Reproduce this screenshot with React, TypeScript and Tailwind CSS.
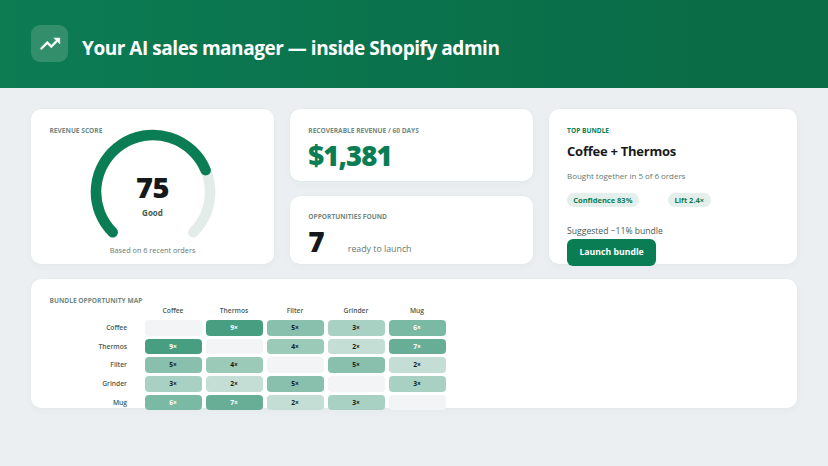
import type { ReactNode } from 'react';
import clsx from 'clsx';

const products = ['Coffee', 'Thermos', 'Filter', 'Grinder', 'Mug'];

const matrix = [
  [0, 9, 5, 3, 6],
  [9, 0, 4, 2, 7],
  [5, 4, 0, 5, 2],
  [3, 2, 5, 0, 3],
  [6, 7, 2, 3, 0],
];

const cellColors: Record<number, string> = {
  0: 'bg-[#f2f4f6]',
  2: 'bg-[#c4ddd5] text-[#16201c]',
  3: 'bg-[#a9d1c3] text-[#16201c]',
  4: 'bg-[#9bcab9] text-[#16201c]',
  5: 'bg-[#89c0ad] text-[#16201c]',
  6: 'bg-[#7ab9a3] text-white',
  7: 'bg-[#68ae96] text-white',
  9: 'bg-[#489e80] text-white',
};

const Card = ({ className, children }: { className?: string; children: ReactNode }) => (
  <div className={clsx('rounded-[10px] bg-white px-[18.5px] whitespace-nowrap shadow-[0_0_0_0.5px_#e0e9e6,0_3px_8px_rgba(20,60,45,0.03)]', className)}>
    {children}
  </div>
);

const Label = ({ className, children }: { className?: string; children: ReactNode }) => (
  <div className={clsx('text-[6.6px] leading-[10px] font-bold', className)}>{children}</div>
);

const Gauge = () => (
  <svg className="block" width="126" height="112" viewBox="0 0 126 112" fill="none" strokeWidth="10.5" strokeLinecap="round">
    <path d="M22.7 103.3A57 57 0 1 1 103.3 103.3" stroke="#e4ecea" />
    <path d="M22.7 103.3A57 57 0 1 1 115.66 41.19" stroke="#0b7d54" />
  </svg>
);

const App = () => {
  return (
    <div className="h-[466px] w-[828px] overflow-hidden bg-[#ebeff2] font-['Open_Sans','Noto_Sans',sans-serif] text-[#16191b]">
      <header className="flex h-[88px] items-center bg-linear-to-r from-[#0c7c53] to-[#096c47] to-85% pl-[31px]">
        <div className="mb-px flex size-[37px] items-center justify-center rounded-[9px] bg-[#338e6c] text-white">
          <svg width="24" height="24" viewBox="0 0 24 24" fill="white" stroke="white" strokeWidth="0.5">
            <path d="M15.8 6l2.4 2.3-4.9 4.9-4-4L2.2 16.4l1.3 1.3 5.8-5.8 4 4 6.3-6.3L21.8 12V6z" />
          </svg>
        </div>
        <h1 className="mt-[7px] ml-[14px] text-[19px] leading-6 font-bold tracking-[-0.46px] whitespace-nowrap text-white">
          Your AI sales manager — inside Shopify admin
        </h1>
      </header>

      <main className="flex flex-col gap-[15px] px-[31px] pt-[21px]">
        <div className="grid h-[155px] grid-cols-[243.2px_243.2px_1fr] grid-rows-[155px] gap-[15.6px]">
          {/* Revenue score */}
          <Card className="flex flex-col pt-[17px]">
            <Label className="text-[#708983]">REVENUE SCORE</Label>
            <div className="relative -mt-[7.5px] ml-[40px] h-[112px] w-[126px]">
              <Gauge />
              <div className="absolute inset-x-0 top-[42px] text-center text-[29px] leading-8 font-extrabold tracking-[-0.5px]">75</div>
              <div className="absolute inset-x-0 top-[78px] text-center text-[8px] leading-3 font-bold text-[#475b55]">Good</div>
            </div>
            <div className="mt-[3px] text-center text-[7.3px] leading-3 text-[#647a74]">Based on 6 recent orders</div>
          </Card>

          <div className="flex flex-col gap-[15px]">
            <Card className="h-[72px] pt-[17px]">
              <Label className="text-[#708983]">RECOVERABLE REVENUE / 60 DAYS</Label>
              <div className="mt-1 text-[27.5px] leading-8 font-extrabold tracking-[-0.9px] text-[#0b7d54]">$1,381</div>
            </Card>
            <Card className="h-[68px] pt-4">
              <Label className="text-[#708983]">OPPORTUNITIES FOUND</Label>
              <div className="mt-[3px] flex items-baseline">
                <span className="w-[39.5px] text-[28px] leading-8 font-extrabold">7</span>
                <span className="text-[8.8px] text-[#647a74]">ready to launch</span>
              </div>
            </Card>
          </div>

          {/* Top bundle */}
          <Card className="pt-[17px]">
            <Label className="text-[#0b7d54]">TOP BUNDLE</Label>
            <div className="mt-[6px] text-[13px] leading-[18px] font-bold tracking-[-0.25px]">Coffee + Thermos</div>
            <div className="mt-[10px] text-[8px] leading-3 tracking-[-0.04px] text-[#647a74]">Bought together in 5 of 6 orders</div>
            <div className="mt-[11px] flex h-[14px] gap-[29px] text-[7.5px] leading-[14px] font-bold text-[#0b7d54]">
              <span className="w-[71.5px] rounded-full bg-[#e4eeeb] text-center">Confidence 83%</span>
              <span className="w-[43.5px] rounded-full bg-[#e4eeeb] text-center">Lift 2.4×</span>
            </div>
            <div className="mt-[18px] text-[8.6px] leading-3 text-[#475b55]">Suggested −11% bundle</div>
            <button className="mt-[2px] block h-[27px] w-[89px] rounded-[6px] bg-[#0b7d54] text-[8.7px] font-bold text-white">
              Launch bundle
            </button>
          </Card>
        </div>

        {/* Bundle opportunity map */}
        <Card className="h-[128.5px] pt-[17px]">
          <Label className="text-[#708983]">BUNDLE OPPORTUNITY MAP</Label>
          <div className="grid grid-cols-[91px_repeat(5,57px)] gap-x-1 text-center text-[6.7px] leading-[10px] font-semibold text-[#475b55]">
            <span />
            {products.map((name) => (
              <span key={name}>{name}</span>
            ))}
          </div>
          <div className="mt-[4px] flex flex-col gap-[3px]">
            {matrix.map((row, i) => (
              <div key={products[i]} className="grid h-[15.7px] grid-cols-[91px_repeat(5,57px)] gap-x-1 text-center text-[6.7px] leading-[15.7px]">
                <span className="pr-[13.5px] text-right font-semibold text-[#475b55]">{products[i]}</span>
                {row.map((value, j) => (
                  <span key={j} className={clsx('rounded-[4px] font-bold', cellColors[value])}>
                    {value > 0 && `${value}×`}
                  </span>
                ))}
              </div>
            ))}
          </div>
        </Card>
      </main>
    </div>
  );
};

export default App;
